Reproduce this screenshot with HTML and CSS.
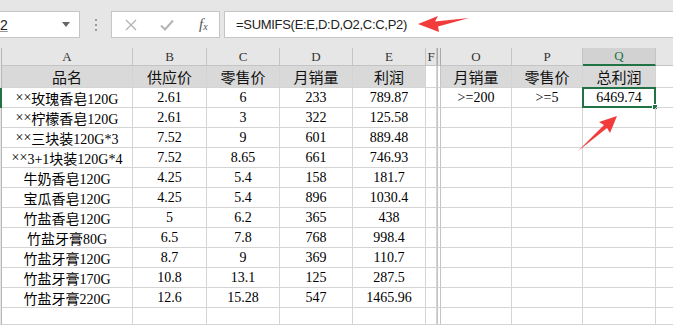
FILE: index.html
```html
<!DOCTYPE html>
<html lang="zh-CN">
<head>
<meta charset="utf-8">
<link rel="stylesheet" href="styles.css">
</head>
<body>
<div class="app">
  <div class="toolbar">
    <div class="namebox"><span class="name-text">2</span><span class="dd"></span></div>
    <div class="grip"><i></i><i></i><i></i></div>
    <div class="fxbox">
      <svg class="ico" width="14" height="14" viewBox="0 0 14 14"><path d="M2 2L12 12M12 2L2 12" stroke="#b4b4b4" stroke-width="1.4" fill="none"/></svg>
      <svg class="ico" width="16" height="14" viewBox="0 0 16 14"><path d="M2 7.5L6 11.5L14 2.5" stroke="#b4b4b4" stroke-width="2" fill="none"/></svg>
      <span class="fx">f<sub>x</sub></span>
    </div>
    <div class="formula">=SUMIFS(E:E,D:D,O2,C:C,P2)</div>
  </div>

  <div class="sheet">
    <!-- column header row -->
    <div class="rh corner"></div>
    <div class="ch">A</div><div class="ch">B</div><div class="ch">C</div><div class="ch">D</div><div class="ch">E</div><div class="ch">F</div><div class="ch hid"></div><div class="ch">O</div><div class="ch">P</div><div class="ch sel">Q</div><div class="ch last"></div>

    <!-- row 1 -->
    <div class="rh"></div>
    <div class="c hd">品名</div><div class="c hd">供应价</div><div class="c hd">零售价</div><div class="c hd">月销量</div><div class="c hd">利润</div><div class="c"></div><div class="c hid"></div><div class="c hd">月销量</div><div class="c hd">零售价</div><div class="c hd">总利润</div><div class="c last"></div>

    <!-- row 2 -->
    <div class="rh act"></div>
    <div class="c"><span class="x">××</span>玫瑰香皂120G</div><div class="c">2.61</div><div class="c">6</div><div class="c">233</div><div class="c">789.87</div><div class="c"></div><div class="c hid"></div><div class="c">&gt;=200</div><div class="c">&gt;=5</div><div class="c active">6469.74<span class="handle"></span></div><div class="c last"></div>

    <div class="rh"></div>
    <div class="c"><span class="x">××</span>柠檬香皂120G</div><div class="c">2.61</div><div class="c">3</div><div class="c">322</div><div class="c">125.58</div><div class="c"></div><div class="c hid"></div><div class="c"></div><div class="c"></div><div class="c"></div><div class="c last"></div>

    <div class="rh"></div>
    <div class="c"><span class="x">××</span>三块装120G*3</div><div class="c">7.52</div><div class="c">9</div><div class="c">601</div><div class="c">889.48</div><div class="c"></div><div class="c hid"></div><div class="c"></div><div class="c"></div><div class="c"></div><div class="c last"></div>

    <div class="rh"></div>
    <div class="c"><span class="x">××</span>3+1块装120G*4</div><div class="c">7.52</div><div class="c">8.65</div><div class="c">661</div><div class="c">746.93</div><div class="c"></div><div class="c hid"></div><div class="c"></div><div class="c"></div><div class="c"></div><div class="c last"></div>

    <div class="rh"></div>
    <div class="c">牛奶香皂120G</div><div class="c">4.25</div><div class="c">5.4</div><div class="c">158</div><div class="c">181.7</div><div class="c"></div><div class="c hid"></div><div class="c"></div><div class="c"></div><div class="c"></div><div class="c last"></div>

    <div class="rh"></div>
    <div class="c">宝瓜香皂120G</div><div class="c">4.25</div><div class="c">5.4</div><div class="c">896</div><div class="c">1030.4</div><div class="c"></div><div class="c hid"></div><div class="c"></div><div class="c"></div><div class="c"></div><div class="c last"></div>

    <div class="rh"></div>
    <div class="c">竹盐香皂120G</div><div class="c">5</div><div class="c">6.2</div><div class="c">365</div><div class="c">438</div><div class="c"></div><div class="c hid"></div><div class="c"></div><div class="c"></div><div class="c"></div><div class="c last"></div>

    <div class="rh"></div>
    <div class="c">竹盐牙膏80G</div><div class="c">6.5</div><div class="c">7.8</div><div class="c">768</div><div class="c">998.4</div><div class="c"></div><div class="c hid"></div><div class="c"></div><div class="c"></div><div class="c"></div><div class="c last"></div>

    <div class="rh"></div>
    <div class="c">竹盐牙膏120G</div><div class="c">8.7</div><div class="c">9</div><div class="c">369</div><div class="c">110.7</div><div class="c"></div><div class="c hid"></div><div class="c"></div><div class="c"></div><div class="c"></div><div class="c last"></div>

    <div class="rh"></div>
    <div class="c">竹盐牙膏170G</div><div class="c">10.8</div><div class="c">13.1</div><div class="c">125</div><div class="c">287.5</div><div class="c"></div><div class="c hid"></div><div class="c"></div><div class="c"></div><div class="c"></div><div class="c last"></div>

    <div class="rh"></div>
    <div class="c">竹盐牙膏220G</div><div class="c">12.6</div><div class="c">15.28</div><div class="c">547</div><div class="c">1465.96</div><div class="c"></div><div class="c hid"></div><div class="c"></div><div class="c"></div><div class="c"></div><div class="c last"></div>

    <div class="rh"></div>
    <div class="c"></div><div class="c"></div><div class="c"></div><div class="c"></div><div class="c"></div><div class="c"></div><div class="c hid"></div><div class="c"></div><div class="c"></div><div class="c"></div><div class="c last"></div>
  </div>

  <svg class="arrow arrow-top" width="56" height="20" viewBox="0 0 56 20">
    <path d="M0 9 L20 1 L17 6.5 L51 3 L20 11.5 L21 17 Z" fill="#f23b3b"/>
  </svg>
  <svg class="arrow arrow-cell" width="44" height="38" viewBox="0 0 44 38">
    <path d="M40 1 L33 18 L30 13 L1 36 L27 10 L22 7 Z" fill="#f23b3b"/>
  </svg>
</div>
</body>
</html>
```

FILE: styles.css
```css
* { box-sizing: border-box; }
html, body { margin: 0; padding: 0; background: #fff; }
body { width: 673px; height: 325px; overflow: hidden; }

.app { position: relative; width: 673px; height: 325px; overflow: hidden; }

.toolbar {
  height: 48px;
  background: #e6e6e6;
  display: flex;
  align-items: flex-start;
  padding-top: 11px;
}
.namebox {
  width: 84px;
  margin-left: -4px;
  height: 27px;
  background: #fff;
  border: 1px solid #c6c6c6;
  display: flex;
  align-items: center;
  padding-left: 3px;
  font: 14px "Liberation Sans", sans-serif;
  color: #222;
  position: relative;
}
.name-text { text-decoration: underline; text-decoration-color: #999; }
.dd {
  position: absolute;
  right: 9px;
  top: 10px;
  width: 0; height: 0;
  border-left: 4px solid transparent;
  border-right: 4px solid transparent;
  border-top: 5px solid #666;
}
.grip {
  width: 31px;
  height: 27px;
  display: flex;
  flex-direction: column;
  align-items: center;
  justify-content: center;
  gap: 3px;
}
.grip i { display: block; width: 2px; height: 2px; background: #9a9a9a; }
.fxbox {
  width: 109px;
  height: 27px;
  background: #fff;
  border: 1px solid #c6c6c6;
  display: flex;
  align-items: center;
  padding-left: 12px;
  gap: 21px;
}
.fx {
  font: italic 15px "Liberation Serif", serif;
  color: #555;
  margin-left: 3px;
}
.fx sub { font-size: 10px; vertical-align: -1px; }
.formula {
  margin-left: 4px;
  flex: 1;
  height: 27px;
  margin-right: -4px;
  background: #fff;
  border: 1px solid #c6c6c6;
  padding-left: 11px;
  display: flex;
  align-items: center;
  font: 13px "Liberation Sans", sans-serif;
  letter-spacing: -0.3px;
  color: #222;
}

.sheet {
  display: grid;
  grid-template-columns: 2px 131px 74px 73px 73px 73px 11px 4px 71px 71px 73px 1fr;
  grid-template-rows: 18px 22px repeat(11, 20px) 1fr;
  height: 277px;
  font: 14px "Liberation Serif", "Noto Sans CJK SC", serif;
  color: #000;
}
.rh { background: #e6e6e6; border-right: 1px solid #b8b8b8; }
.rh.act { border-right: 2px solid #217346; }
.ch {
  background: #e6e6e6;
  border-right: 1px solid #c4c4c4;
  border-bottom: 1px solid #c4c4c4;
  text-align: center;
  font: 13px/17px "Liberation Serif", serif;
  color: #333;
}
.ch.sel {
  background: #d2d2d2;
  color: #217346;
  border-bottom: 2px solid #217346;
  line-height: 16px;
}
.ch.hid { border-left: 1px solid #aaa; border-right: 1px solid #aaa; background: #e6e6e6; }
.ch.last { border-right: none; }

.c {
  border-right: 1px solid #d4d4d4;
  border-bottom: 1px solid #d4d4d4;
  display: flex;
  align-items: center;
  justify-content: center;
  white-space: nowrap;
  position: relative;
}
.c.hid { border-left: 1px solid #c4c4c4; border-right: 1px solid #c4c4c4; }
.c.last { border-right: none; }
.c.hd {
  background: #d9d9d9;
  font-family: "Noto Sans CJK SC", sans-serif;
  font-size: 15px;
  color: #111;
}
.x { font-size: 14px; }

.c.active {
  border: 2px solid #217346;
  margin: -1px 0 0 -1px;
}
.handle {
  position: absolute;
  right: -4px;
  bottom: -4px;
  width: 6px;
  height: 6px;
  background: #217346;
  border: 1px solid #fff;
}

.arrow { position: absolute; }
.arrow-top { left: 418px; top: 15px; }
.arrow-cell { left: 577px; top: 115px; }
```
